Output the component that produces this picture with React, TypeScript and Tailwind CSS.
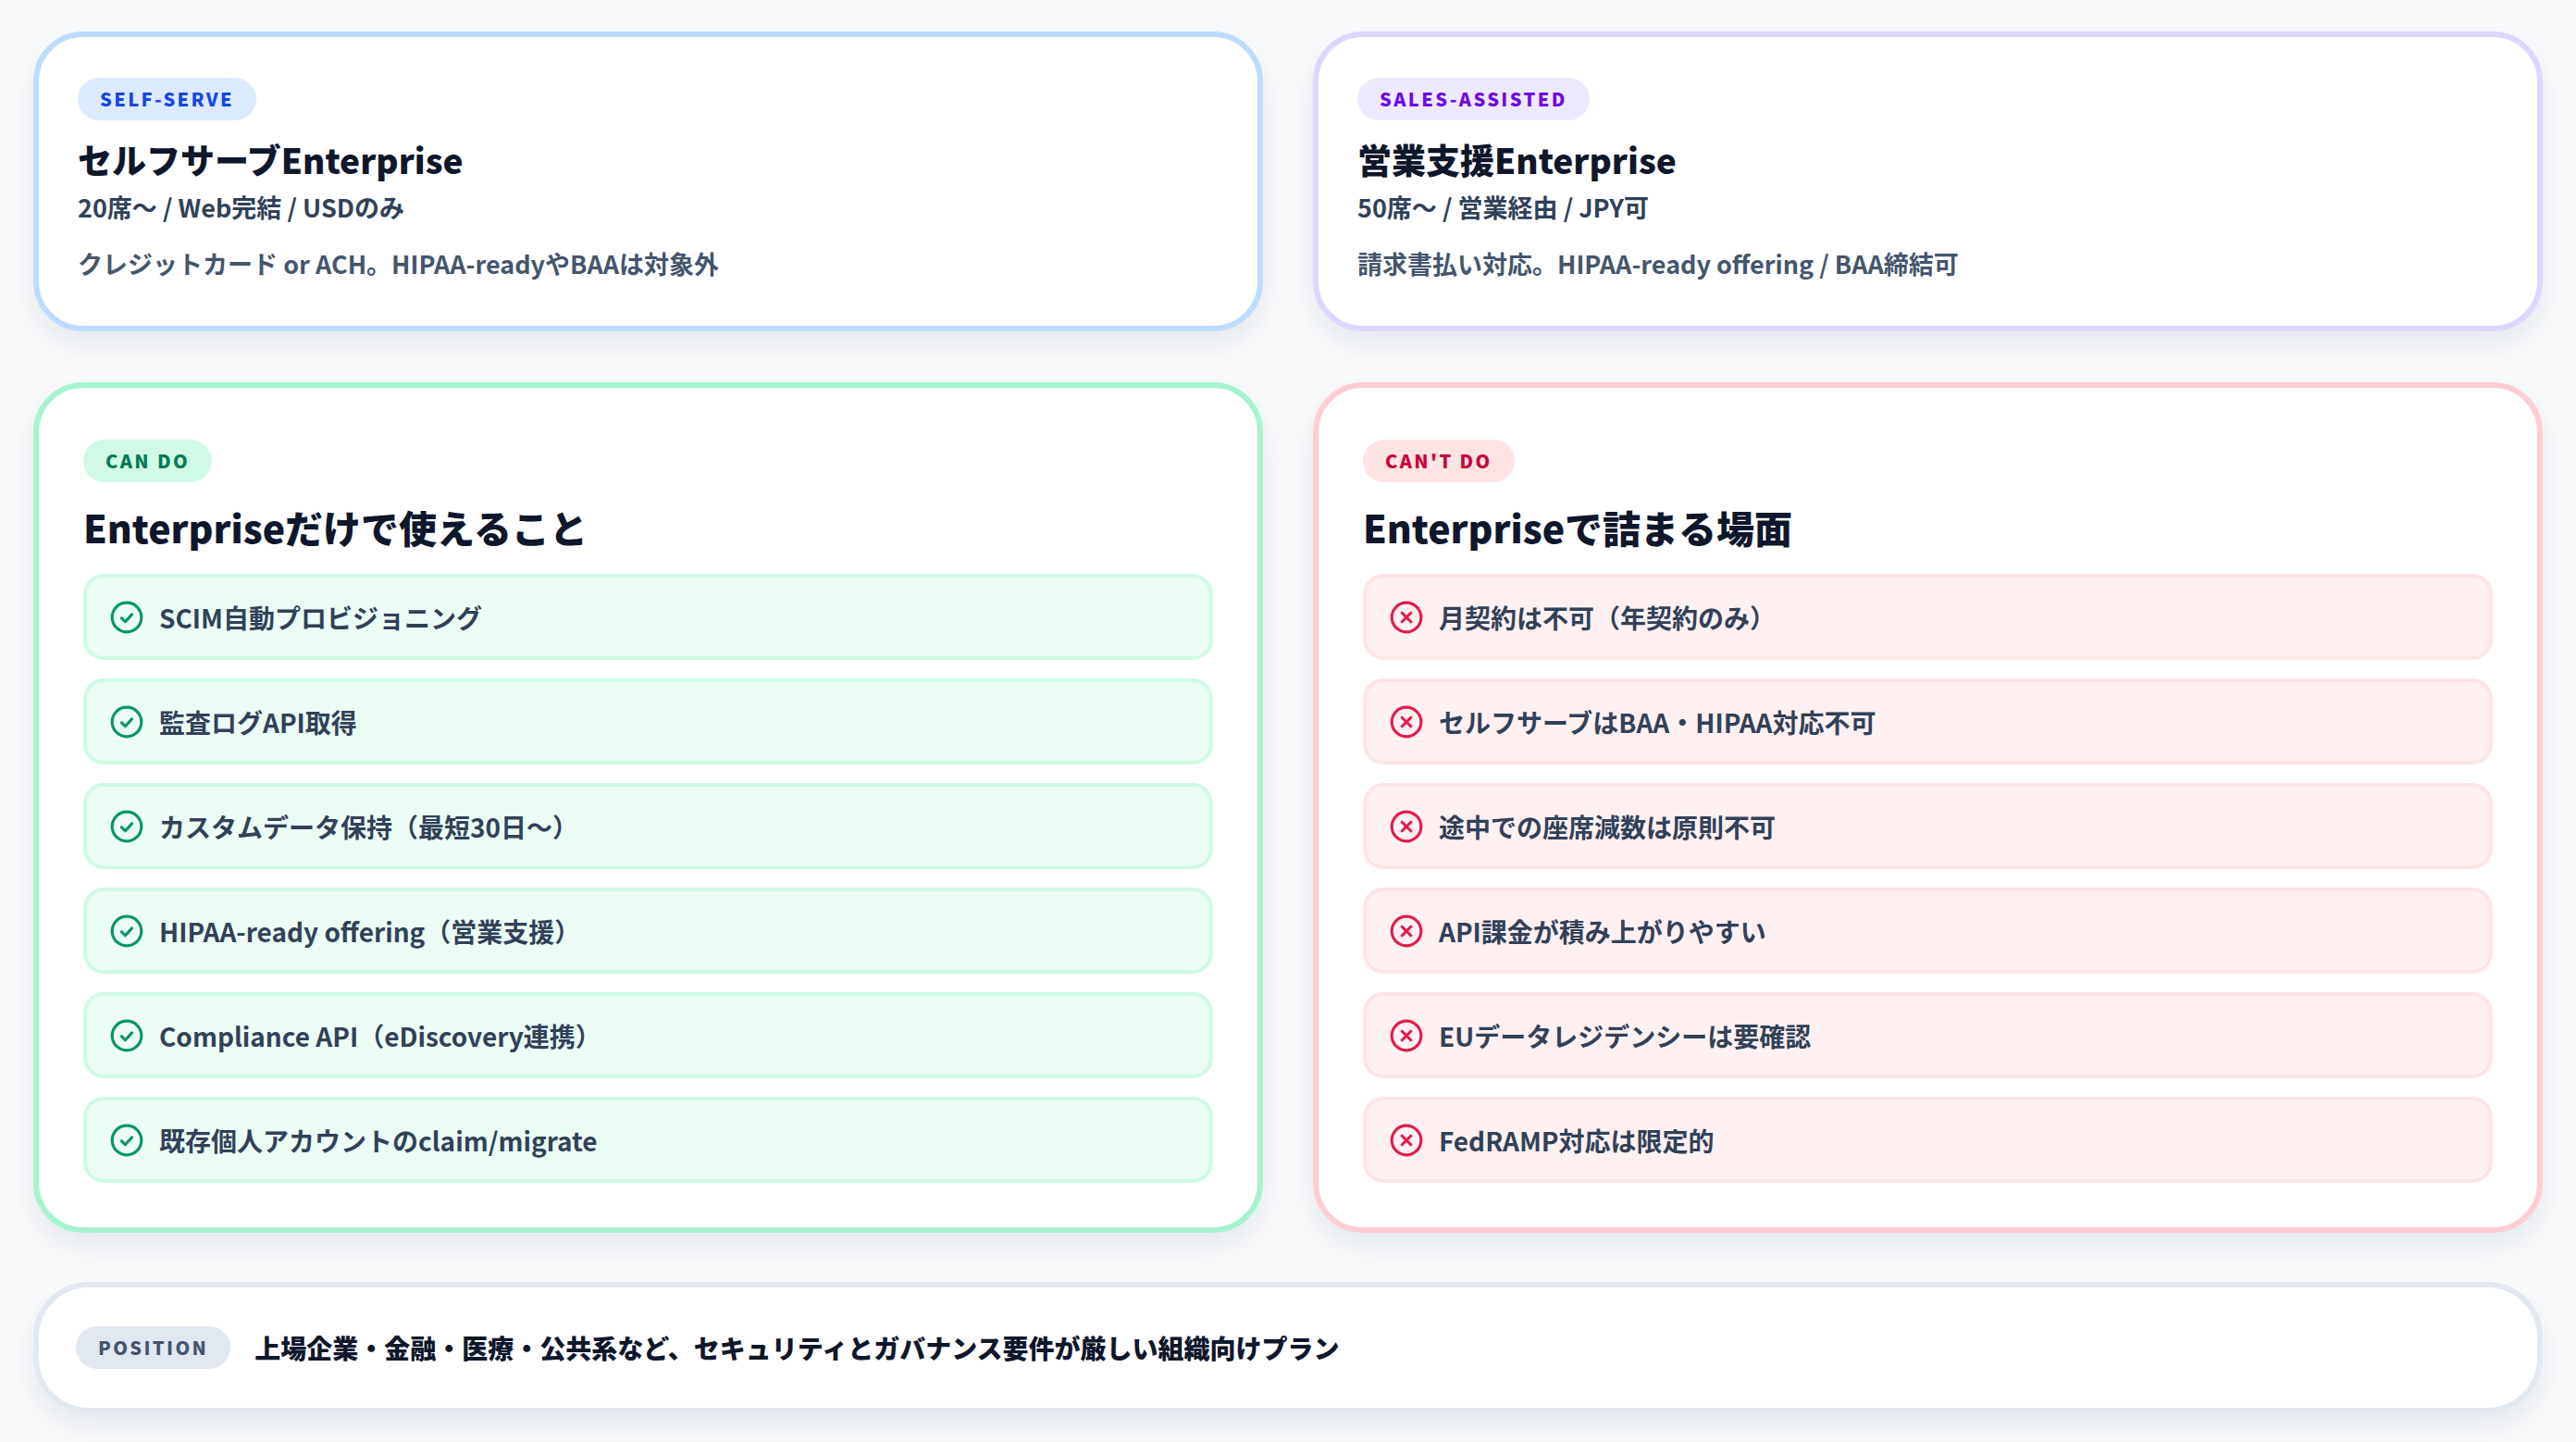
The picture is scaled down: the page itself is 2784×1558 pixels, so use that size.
const font = { fontFamily: '"Noto Sans CJK JP", "Noto Sans", sans-serif' };

const canDo = [
  "SCIM自動プロビジョニング",
  "監査ログAPI取得",
  "カスタムデータ保持（最短30日〜）",
  "HIPAA-ready offering（営業支援）",
  "Compliance API（eDiscovery連携）",
  "既存個人アカウントのclaim/migrate",
];

const cantDo = [
  "月契約は不可（年契約のみ）",
  "セルフサーブはBAA・HIPAA対応不可",
  "途中での座席減数は原則不可",
  "API課金が積み上がりやすい",
  "EUデータレジデンシーは要確認",
  "FedRAMP対応は限定的",
];

const CheckIcon = () => (
  <svg width="38" height="38" viewBox="0 0 24 24" fill="none" stroke="#059669" strokeWidth="2" strokeLinecap="round" strokeLinejoin="round">
    <circle cx="12" cy="12" r="10" />
    <path d="M8.5 12.5l2.5 2.5 4.5-5" />
  </svg>
);

const XIcon = () => (
  <svg width="38" height="38" viewBox="0 0 24 24" fill="none" stroke="#e11d48" strokeWidth="2" strokeLinecap="round">
    <circle cx="12" cy="12" r="10" />
    <path d="M9 9l6 6M15 9l-6 6" />
  </svg>
);

const Badge = ({ text, cls }: { text: string; cls: string }) => (
  <span className={`inline-flex items-center h-[46px] px-6 rounded-full text-[20px] font-extrabold tracking-[0.12em] ${cls}`}>
    {text}
  </span>
);

const PlanCard = ({ badge, badgeCls, border, title, sub, body }: {
  badge: string; badgeCls: string; border: string; title: string; sub: string; body: string;
}) => (
  <div className={`bg-white rounded-[54px] border-[6px] ${border} px-[42px] pt-[44px] pb-[40px] shadow-[0_14px_28px_rgba(15,23,42,0.08)] h-[324px]`}>
    <Badge text={badge} cls={badgeCls} />
    <h2 className="mt-[18px] text-[37px] font-extrabold text-slate-900 leading-[1.3]">{title}</h2>
    <p className="mt-[8px] text-[27px] font-bold text-slate-700">{sub}</p>
    <p className="mt-[20px] text-[27px] font-bold text-slate-600">{body}</p>
  </div>
);

const ListCard = ({ badge, badgeCls, border, title, items, itemCls, Icon }: {
  badge: string; badgeCls: string; border: string; title: string; items: string[]; itemCls: string; Icon: () => JSX.Element;
}) => (
  <div className={`bg-white rounded-[54px] border-[6px] ${border} px-[48px] pt-[56px] pb-[48px] shadow-[0_14px_28px_rgba(15,23,42,0.08)]`}>
    <Badge text={badge} cls={badgeCls} />
    <h2 className="mt-[22px] mb-[24px] text-[41px] font-extrabold text-slate-900 leading-[1.3]">{title}</h2>
    <div className="flex flex-col gap-[20px]">
      {items.map((t) => (
        <div key={t} className={`h-[93px] rounded-[22px] border-[4px] flex items-center gap-[16px] px-[24px] ${itemCls}`}>
          <Icon />
          <span className="text-[28px] font-bold text-slate-700">{t}</span>
        </div>
      ))}
    </div>
  </div>
);

export default function App() {
  return (
    <div style={font} className="w-[2784px] h-[1558px] bg-[#f8fafc] px-[36px] pt-[34px]">
      <div className="grid grid-cols-2 gap-x-[54px] gap-y-[55px]">
        <PlanCard
          badge="SELF-SERVE"
          badgeCls="bg-blue-100 text-blue-700"
          border="border-blue-200"
          title="セルフサーブEnterprise"
          sub="20席〜 / Web完結 / USDのみ"
          body="クレジットカード or ACH。HIPAA-readyやBAAは対象外"
        />
        <PlanCard
          badge="SALES-ASSISTED"
          badgeCls="bg-violet-100 text-violet-700"
          border="border-violet-200"
          title="営業支援Enterprise"
          sub="50席〜 / 営業経由 / JPY可"
          body="請求書払い対応。HIPAA-ready offering / BAA締結可"
        />
        <ListCard
          badge="CAN DO"
          badgeCls="bg-emerald-100 text-emerald-700"
          border="border-emerald-200"
          title="Enterpriseだけで使えること"
          items={canDo}
          itemCls="bg-emerald-50 border-emerald-100"
          Icon={CheckIcon}
        />
        <ListCard
          badge="CAN'T DO"
          badgeCls="bg-rose-100 text-rose-700"
          border="border-rose-200"
          title="Enterpriseで詰まる場面"
          items={cantDo}
          itemCls="bg-rose-50 border-rose-100"
          Icon={XIcon}
        />
      </div>
      <div className="mt-[53px] h-[142px] bg-white rounded-[60px] border-[6px] border-slate-200 flex items-center gap-[26px] px-[40px] shadow-[0_14px_28px_rgba(15,23,42,0.08)]">
        <Badge text="POSITION" cls="bg-slate-200 text-slate-600" />
        <span className="text-[28px] font-extrabold text-slate-900">上場企業・金融・医療・公共系など、セキュリティとガバナンス要件が厳しい組織向けプラン</span>
      </div>
    </div>
  );
}
